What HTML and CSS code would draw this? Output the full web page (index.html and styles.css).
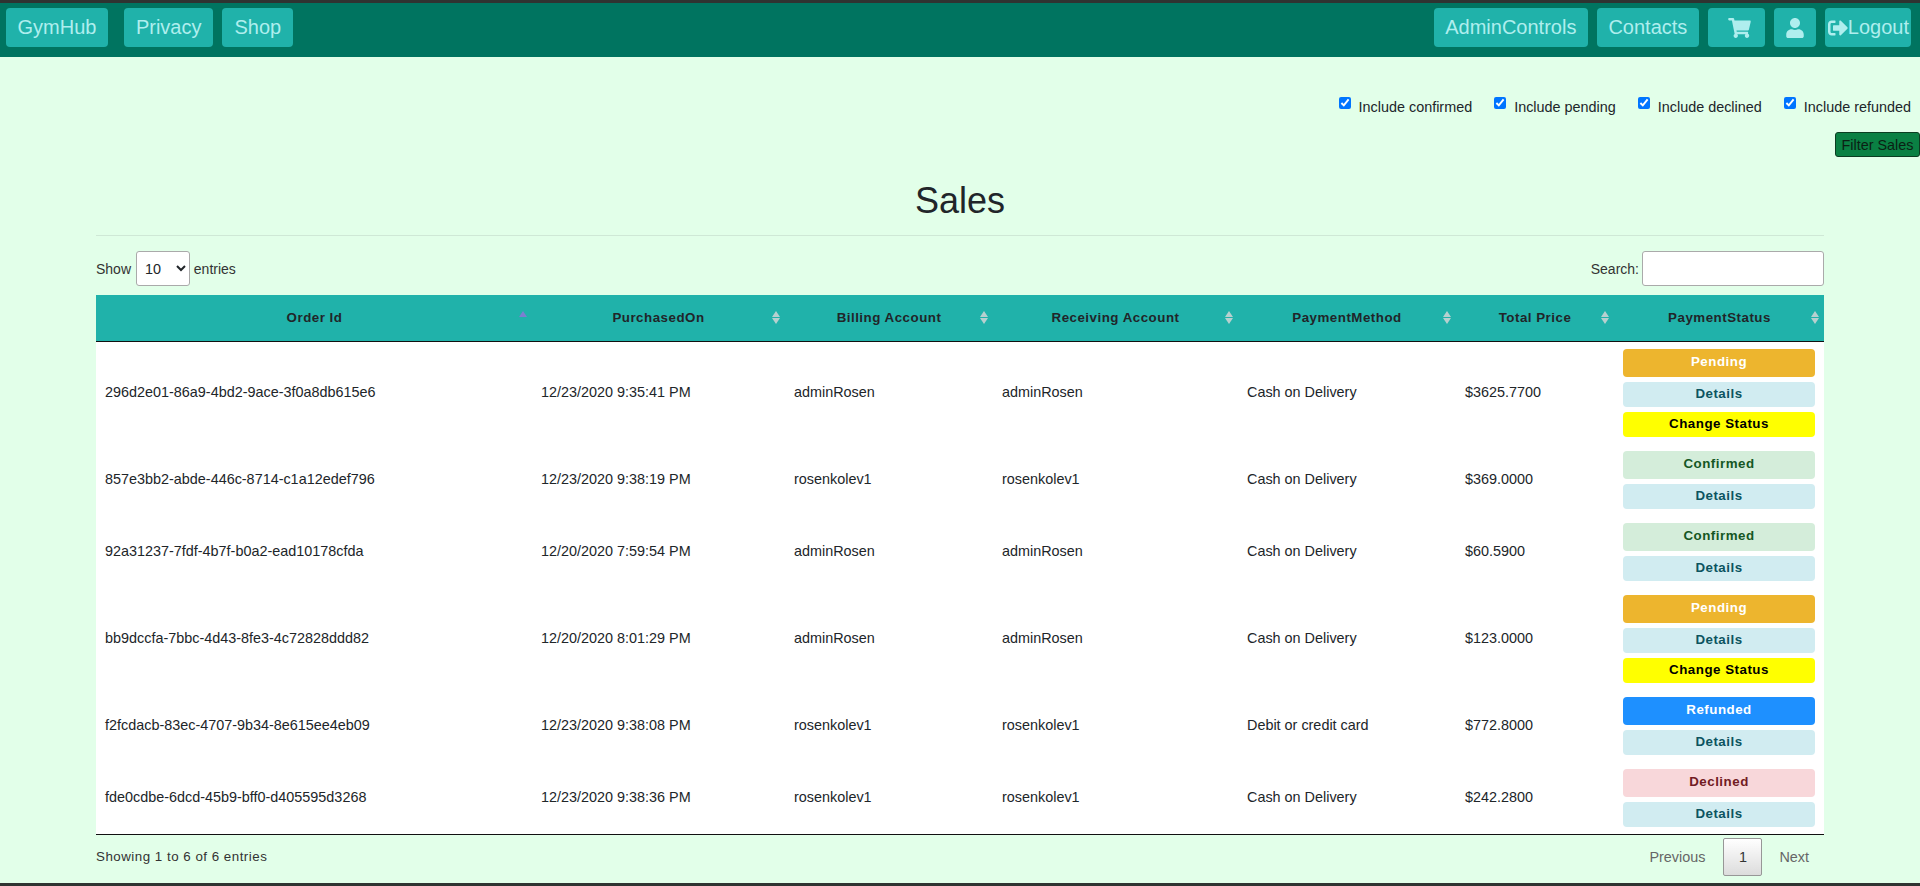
FILE: index.html
```html
<!DOCTYPE html>
<html lang="en">
<head>
    <meta charset="UTF-8">
    <meta name="viewport" content="width=device-width, initial-scale=1.0">
    <title>Sales - GymHub</title>
    <link rel="stylesheet" href="styles.css">
</head>
<body>

<nav class="navbar">
    <div class="nav-group nav-left">
        <a class="nav-btn brand" href="#">GymHub</a>
        <a class="nav-btn" href="#">Privacy</a>
        <a class="nav-btn" href="#">Shop</a>
    </div>
    <div class="nav-group">
        <a class="nav-btn" href="#">AdminControls</a>
        <a class="nav-btn" href="#">Contacts</a>
        <a class="nav-btn icon-cart" href="#" aria-label="Cart">
            <svg viewBox="0 0 576 512" width="23" height="20"><path fill="currentColor" d="M528.12 301.319l47.273-208C578.806 78.301 567.391 64 551.99 64H159.208l-9.166-44.81C147.758 8.021 137.93 0 126.529 0H24C10.745 0 0 10.745 0 24v16c0 13.255 10.745 24 24 24h69.883l70.248 343.435C147.325 417.1 136 435.222 136 456c0 30.928 25.072 56 56 56s56-25.072 56-56c0-15.674-6.447-29.835-16.824-40h209.647C430.447 426.165 424 440.326 424 456c0 30.928 25.072 56 56 56s56-25.072 56-56c0-22.172-12.888-41.332-31.579-50.405l5.517-24.276c3.413-15.018-8.002-29.319-23.403-29.319H218.117l-6.545-32h293.145c11.206 0 20.92-7.754 23.403-18.681z"/></svg>
        </a>
        <a class="nav-btn icon-user" href="#" aria-label="Account">
            <svg viewBox="0 0 448 512" width="18" height="20"><path fill="currentColor" d="M224 256c70.7 0 128-57.3 128-128S294.7 0 224 0 96 57.3 96 128s57.3 128 128 128zm89.6 32h-16.7c-22.2 10.2-46.9 16-72.9 16s-50.6-5.8-72.9-16h-16.7C60.2 288 0 348.2 0 422.4V464c0 26.5 21.5 48 48 48h352c26.5 0 48-21.5 48-48v-41.6c0-74.2-60.2-134.4-134.4-134.4z"/></svg>
        </a>
        <a class="nav-btn logout" href="#">
            <svg viewBox="0 0 512 512" width="20" height="20"><path fill="currentColor" d="M497 273L329 441c-15 15-41 4.5-41-17v-96H152c-13.3 0-24-10.7-24-24v-96c0-13.3 10.7-24 24-24h136V88c0-21.4 25.9-32 41-17l168 168c9.3 9.4 9.3 24.6 0 34zM192 436v-40c0-6.6-5.4-12-12-12H96c-17.7 0-32-14.3-32-32V160c0-17.7 14.3-32 32-32h84c6.6 0 12-5.4 12-12V76c0-6.6-5.4-12-12-12H96c-53 0-96 43-96 96v192c0 53 43 96 96 96h84c6.6 0 12-5.4 12-12z"/></svg>Logout
        </a>
    </div>
</nav>

<main class="content">
    <form class="filters">
        <div class="filter-checks">
            <label class="check"><input type="checkbox" checked><span>Include confirmed</span></label>
            <label class="check"><input type="checkbox" checked><span>Include pending</span></label>
            <label class="check"><input type="checkbox" checked><span>Include declined</span></label>
            <label class="check"><input type="checkbox" checked><span>Include refunded</span></label>
        </div>
        <button type="button" class="filter-btn">Filter Sales</button>
    </form>

    <section class="sales">
        <h1>Sales</h1>
        <hr>

        <div class="table-top">
            <label class="length">Show
                <select>
                    <option>10</option>
                    <option>25</option>
                    <option>50</option>
                </select>
                entries</label>
            <label class="search">Search:<input type="search"></label>
        </div>

        <table class="sales-table">
            <colgroup>
                <col class="col-id"><col class="col-date"><col class="col-billing"><col class="col-receiving"><col class="col-method"><col class="col-price"><col class="col-status">
            </colgroup>
            <thead>
                <tr>
                    <th class="sort-asc">Order Id</th>
                    <th>PurchasedOn</th>
                    <th>Billing Account</th>
                    <th>Receiving Account</th>
                    <th>PaymentMethod</th>
                    <th>Total Price</th>
                    <th>PaymentStatus</th>
                </tr>
            </thead>
            <tbody>
                <tr>
                    <td>296d2e01-86a9-4bd2-9ace-3f0a8db615e6</td>
                    <td>12/23/2020 9:35:41 PM</td>
                    <td>adminRosen</td>
                    <td>adminRosen</td>
                    <td>Cash on Delivery</td>
                    <td>$3625.7700</td>
                    <td class="actions">
                        <a class="tag pending">Pending</a>
                        <a class="tag-btn details">Details</a>
                        <a class="tag-btn change">Change Status</a>
                    </td>
                </tr>
                <tr>
                    <td>857e3bb2-abde-446c-8714-c1a12edef796</td>
                    <td>12/23/2020 9:38:19 PM</td>
                    <td>rosenkolev1</td>
                    <td>rosenkolev1</td>
                    <td>Cash on Delivery</td>
                    <td>$369.0000</td>
                    <td class="actions">
                        <a class="tag confirmed">Confirmed</a>
                        <a class="tag-btn details">Details</a>
                    </td>
                </tr>
                <tr>
                    <td>92a31237-7fdf-4b7f-b0a2-ead10178cfda</td>
                    <td>12/20/2020 7:59:54 PM</td>
                    <td>adminRosen</td>
                    <td>adminRosen</td>
                    <td>Cash on Delivery</td>
                    <td>$60.5900</td>
                    <td class="actions">
                        <a class="tag confirmed">Confirmed</a>
                        <a class="tag-btn details">Details</a>
                    </td>
                </tr>
                <tr>
                    <td>bb9dccfa-7bbc-4d43-8fe3-4c72828ddd82</td>
                    <td>12/20/2020 8:01:29 PM</td>
                    <td>adminRosen</td>
                    <td>adminRosen</td>
                    <td>Cash on Delivery</td>
                    <td>$123.0000</td>
                    <td class="actions">
                        <a class="tag pending">Pending</a>
                        <a class="tag-btn details">Details</a>
                        <a class="tag-btn change">Change Status</a>
                    </td>
                </tr>
                <tr>
                    <td>f2fcdacb-83ec-4707-9b34-8e615ee4eb09</td>
                    <td>12/23/2020 9:38:08 PM</td>
                    <td>rosenkolev1</td>
                    <td>rosenkolev1</td>
                    <td>Debit or credit card</td>
                    <td>$772.8000</td>
                    <td class="actions">
                        <a class="tag refunded">Refunded</a>
                        <a class="tag-btn details">Details</a>
                    </td>
                </tr>
                <tr>
                    <td>fde0cdbe-6dcd-45b9-bff0-d405595d3268</td>
                    <td>12/23/2020 9:38:36 PM</td>
                    <td>rosenkolev1</td>
                    <td>rosenkolev1</td>
                    <td>Cash on Delivery</td>
                    <td>$242.2800</td>
                    <td class="actions">
                        <a class="tag declined">Declined</a>
                        <a class="tag-btn details">Details</a>
                    </td>
                </tr>
            </tbody>
        </table>

        <div class="table-bottom">
            <div class="info">Showing 1 to 6 of 6 entries</div>
            <div class="pager">
                <a class="page-link prev">Previous</a>
                <a class="page-link current">1</a>
                <a class="page-link next">Next</a>
            </div>
        </div>
    </section>
</main>

</body>
</html>
```

FILE: styles.css
```css
* {
    box-sizing: border-box;
}
html, body {
    height: 100%;
}
body {
    margin: 0;
    height: 886px;
    overflow: hidden;
    display: flex;
    flex-direction: column;
    border-top: 3px solid #2f3331;
    border-bottom: 3px solid #2f3331;
    background-color: #e2ffe9;
    color: #212529;
    font-family: "Liberation Sans", Arial, sans-serif;
    font-size: 14.4px;
}

/* navbar */
.navbar {
    height: 54px;
    flex: none;
    display: flex;
    justify-content: space-between;
    align-items: flex-start;
    padding: 5px 9px 0 6px;
    background-color: #007460;
}
.nav-group {
    display: flex;
    gap: 9px;
}
.nav-btn {
    height: 39px;
    display: flex;
    align-items: center;
    padding: 0 11.5px;
    border-radius: 4px;
    background-color: #20b2aa;
    color: #afeeee;
    font-size: 20px;
    text-decoration: none;
}
.nav-left .nav-btn {
    padding: 0 12px;
}
.nav-left .brand {
    margin-right: 7px;
    padding: 0 11.5px;
}
.icon-cart {
    padding: 0 14px 0 20px;
}
.icon-user {
    padding: 0 12px;
}
.logout {
    padding: 0 2px 0 3px;
}

/* filters */
.filters {
    display: flex;
    flex-direction: column;
    align-items: flex-end;
    padding-top: 40px;
}
.filter-checks {
    display: flex;
    gap: 22px;
    padding-right: 9px;
}
.check {
    display: flex;
    align-items: flex-start;
    color: #212529;
    line-height: 20px;
}
.check input {
    width: 12px;
    height: 12px;
    margin: 0 8px 0 0;
}
.filter-btn {
    width: 85px;
    height: 25px;
    margin-top: 15px;
    padding: 0;
    border: 1px solid #0b3d21;
    border-radius: 3px;
    background-color: #0a8043;
    color: #0b1f14;
    font-family: inherit;
    font-size: 14.4px;
}

/* sales */
.sales {
    margin: 0 96px;
}
h1 {
    margin: 19px 0 0;
    height: 59px;
    text-align: center;
    font-size: 36px;
    font-weight: 400;
    line-height: 50px;
}
hr {
    margin: 0;
    border: none;
    border-top: 1px solid #cfe8d6;
}
.table-top {
    display: flex;
    justify-content: space-between;
    align-items: center;
    height: 35px;
    margin: 15px 0 9px;
    font-size: 14px;
    color: #333;
}
.length select {
    width: 54px;
    height: 35px;
    margin: 0 0 0 1px;
    padding: 0 4px;
    border: 1px solid #aaa;
    border-radius: 3px;
    background-color: #fff;
    color: #212529;
    font-family: inherit;
    font-size: 14.4px;
}
.search {
    display: flex;
    align-items: center;
    gap: 3px;
}
.search input {
    width: 182px;
    height: 35px;
    border: 1px solid #aaa;
    border-radius: 3px;
    background-color: #fff;
}

/* table */
.sales-table {
    width: 100%;
    table-layout: fixed;
    border-collapse: collapse;
    background-color: #fff;
    border-bottom: 1px solid #111;
}
.col-id { width: 435px; }
.col-date { width: 253px; }
.col-billing { width: 208px; }
.col-receiving { width: 245px; }
.col-method { width: 218px; }
.col-price { width: 158px; }
.col-status { width: 211px; }
th {
    position: relative;
    height: 46px;
    padding: 0 9px 0 11px;
    background-color: #20b2aa;
    border-bottom: 1px solid #111;
    color: #212529;
    font-size: 13.33px;
    font-weight: 700;
    letter-spacing: .5px;
    text-align: center;
}
/* sort arrows */
th::before,
th::after {
    content: "";
    position: absolute;
    right: 4px;
    border-left: 4px solid transparent;
    border-right: 4px solid transparent;
}
th::before {
    top: 16px;
    border-bottom: 6px solid #b6d0cf;
}
th::after {
    top: 23px;
    border-top: 6px solid #b6d0cf;
}
th:last-child::before,
th:last-child::after {
    right: 5px;
}
th.sort-asc::before {
    border-bottom-color: #7b7fd0;
}
th.sort-asc::after {
    display: none;
}
td {
    padding: 0 10px 2px;
    color: #212529;
    font-size: 14.4px;
    vertical-align: middle;
}
td:first-child {
    padding-left: 9px;
}
td.actions {
    padding: 7px 9px 7px 10px;
}
.tag,
.tag-btn {
    display: block;
    border-radius: 4px;
    font-size: 13.33px;
    font-weight: 700;
    letter-spacing: .5px;
    text-align: center;
}
.tag {
    height: 28px;
    line-height: 26px;
}
.tag-btn {
    height: 25px;
    margin-top: 5px;
    line-height: 24px;
}
.pending { background-color: #edb52e; color: #fff; }
.confirmed { background-color: #d4edda; color: #155724; }
.declined { background-color: #f8d7da; color: #721c24; }
.refunded { background-color: #1e90ff; color: #fff; }
.details { background-color: #d1ecf1; color: #0c5460; }
.change { background-color: #ff0; color: #000; }

/* footer of the table */
.table-bottom {
    display: flex;
    justify-content: space-between;
    align-items: center;
    height: 43px;
    padding-top: 1px;
    color: #333;
    font-size: 13.33px;
    letter-spacing: .5px;
}
.pager {
    display: flex;
    align-items: center;
}
.page-link {
    color: #666;
    letter-spacing: 0;
    font-size: 14.4px;
}
.prev {
    padding-right: 18px;
}
.next {
    padding: 0 15px 0 17px;
}
.page-link.current {
    width: 39px;
    height: 38px;
    line-height: 36px;
    text-align: center;
    color: #333;
    border: 1px solid #979797;
    border-radius: 2px;
    background: linear-gradient(to bottom, #fff 0%, #dcdcdc 100%);
}
```
